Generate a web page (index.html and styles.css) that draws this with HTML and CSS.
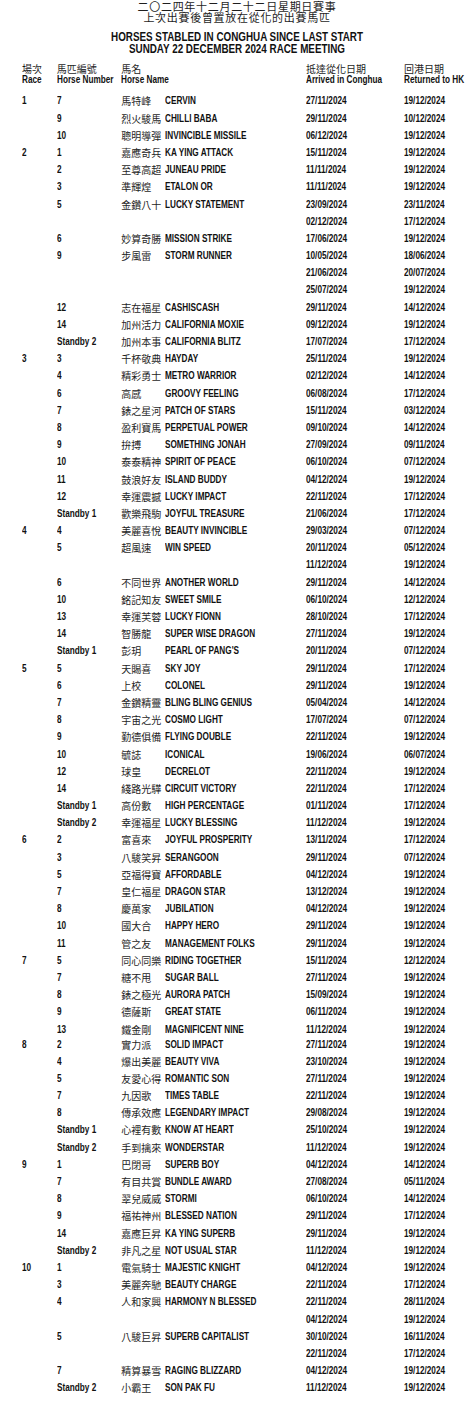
FILE: index.html
```html
<!DOCTYPE html>
<html lang="zh-Hant">
<head>
<meta charset="utf-8">
<title>HORSES STABLED IN CONGHUA SINCE LAST START</title>
<link rel="stylesheet" href="styles.css">
</head>
<body>
<header class="titles">
  <div class="title-zh">
    <div>二〇二四年十二月二十二日星期日賽事</div>
    <div>上次出賽後曾置放在從化的出賽馬匹</div>
  </div>
  <div class="title-en">
    <div>HORSES STABLED IN CONGHUA SINCE LAST START</div>
    <div>SUNDAY 22 DECEMBER 2024 RACE MEETING</div>
  </div>
</header>

<div class="head row">
  <div class="hc"><span class="hz">場次</span><span class="he">Race</span></div>
  <div class="hc"><span class="hz">馬匹編號</span><span class="he">Horse Number</span></div>
  <div class="hc"><span class="hz">馬名</span><span class="he">Horse Name</span></div>
  <div class="hc"><span class="hz">抵達從化日期</span><span class="he">Arrived in Conghua</span></div>
  <div class="hc"><span class="hz">回港日期</span><span class="he">Returned to HK</span></div>
</div>

<main class="table">
  <section class="race">
    <div class="row"><span class="rn">1</span><span class="no">7</span><span class="zh">馬特峰</span><span class="en">CERVIN</span><span class="d">27/11/2024</span><span class="d">19/12/2024</span></div>
    <div class="row"><span class="rn"></span><span class="no">9</span><span class="zh">烈火駿馬</span><span class="en">CHILLI BABA</span><span class="d">29/11/2024</span><span class="d">10/12/2024</span></div>
    <div class="row"><span class="rn"></span><span class="no">10</span><span class="zh">聰明導彈</span><span class="en">INVINCIBLE MISSILE</span><span class="d">06/12/2024</span><span class="d">19/12/2024</span></div>
  </section>
  <section class="race">
    <div class="row"><span class="rn">2</span><span class="no">1</span><span class="zh">嘉應奇兵</span><span class="en">KA YING ATTACK</span><span class="d">15/11/2024</span><span class="d">19/12/2024</span></div>
    <div class="row"><span class="rn"></span><span class="no">2</span><span class="zh">至尊高超</span><span class="en">JUNEAU PRIDE</span><span class="d">11/11/2024</span><span class="d">19/12/2024</span></div>
    <div class="row"><span class="rn"></span><span class="no">3</span><span class="zh">準輝煌</span><span class="en">ETALON OR</span><span class="d">11/11/2024</span><span class="d">19/12/2024</span></div>
    <div class="row"><span class="rn"></span><span class="no">5</span><span class="zh">金鑽八十</span><span class="en">LUCKY STATEMENT</span><span class="d">23/09/2024</span><span class="d">23/11/2024</span></div>
    <div class="row"><span class="d first">02/12/2024</span><span class="d">17/12/2024</span></div>
    <div class="row"><span class="rn"></span><span class="no">6</span><span class="zh">妙算奇勝</span><span class="en">MISSION STRIKE</span><span class="d">17/06/2024</span><span class="d">19/12/2024</span></div>
    <div class="row"><span class="rn"></span><span class="no">9</span><span class="zh">步風雷</span><span class="en">STORM RUNNER</span><span class="d">10/05/2024</span><span class="d">18/06/2024</span></div>
    <div class="row"><span class="d first">21/06/2024</span><span class="d">20/07/2024</span></div>
    <div class="row"><span class="d first">25/07/2024</span><span class="d">19/12/2024</span></div>
    <div class="row"><span class="rn"></span><span class="no">12</span><span class="zh">志在福星</span><span class="en">CASHISCASH</span><span class="d">29/11/2024</span><span class="d">14/12/2024</span></div>
    <div class="row"><span class="rn"></span><span class="no">14</span><span class="zh">加州活力</span><span class="en">CALIFORNIA MOXIE</span><span class="d">09/12/2024</span><span class="d">19/12/2024</span></div>
    <div class="row"><span class="rn"></span><span class="no">Standby 2</span><span class="zh">加州本事</span><span class="en">CALIFORNIA BLITZ</span><span class="d">17/07/2024</span><span class="d">17/12/2024</span></div>
  </section>
  <section class="race">
    <div class="row"><span class="rn">3</span><span class="no">3</span><span class="zh">千杯敬典</span><span class="en">HAYDAY</span><span class="d">25/11/2024</span><span class="d">19/12/2024</span></div>
    <div class="row"><span class="rn"></span><span class="no">4</span><span class="zh">精彩勇士</span><span class="en">METRO WARRIOR</span><span class="d">02/12/2024</span><span class="d">14/12/2024</span></div>
    <div class="row"><span class="rn"></span><span class="no">6</span><span class="zh">高感</span><span class="en">GROOVY FEELING</span><span class="d">06/08/2024</span><span class="d">17/12/2024</span></div>
    <div class="row"><span class="rn"></span><span class="no">7</span><span class="zh">錶之星河</span><span class="en">PATCH OF STARS</span><span class="d">15/11/2024</span><span class="d">03/12/2024</span></div>
    <div class="row"><span class="rn"></span><span class="no">8</span><span class="zh">盈利寶馬</span><span class="en">PERPETUAL POWER</span><span class="d">09/10/2024</span><span class="d">14/12/2024</span></div>
    <div class="row"><span class="rn"></span><span class="no">9</span><span class="zh">拚搏</span><span class="en">SOMETHING JONAH</span><span class="d">27/09/2024</span><span class="d">09/11/2024</span></div>
    <div class="row"><span class="rn"></span><span class="no">10</span><span class="zh">泰泰精神</span><span class="en">SPIRIT OF PEACE</span><span class="d">06/10/2024</span><span class="d">07/12/2024</span></div>
    <div class="row"><span class="rn"></span><span class="no">11</span><span class="zh">鼓浪好友</span><span class="en">ISLAND BUDDY</span><span class="d">04/12/2024</span><span class="d">19/12/2024</span></div>
    <div class="row"><span class="rn"></span><span class="no">12</span><span class="zh">幸運震撼</span><span class="en">LUCKY IMPACT</span><span class="d">22/11/2024</span><span class="d">17/12/2024</span></div>
    <div class="row"><span class="rn"></span><span class="no">Standby 1</span><span class="zh">歡樂飛駒</span><span class="en">JOYFUL TREASURE</span><span class="d">21/06/2024</span><span class="d">17/12/2024</span></div>
  </section>
  <section class="race">
    <div class="row"><span class="rn">4</span><span class="no">4</span><span class="zh">美麗喜悅</span><span class="en">BEAUTY INVINCIBLE</span><span class="d">29/03/2024</span><span class="d">07/12/2024</span></div>
    <div class="row"><span class="rn"></span><span class="no">5</span><span class="zh">超風速</span><span class="en">WIN SPEED</span><span class="d">20/11/2024</span><span class="d">05/12/2024</span></div>
    <div class="row"><span class="d first">11/12/2024</span><span class="d">19/12/2024</span></div>
    <div class="row"><span class="rn"></span><span class="no">6</span><span class="zh">不同世界</span><span class="en">ANOTHER WORLD</span><span class="d">29/11/2024</span><span class="d">14/12/2024</span></div>
    <div class="row"><span class="rn"></span><span class="no">10</span><span class="zh">銘記知友</span><span class="en">SWEET SMILE</span><span class="d">06/10/2024</span><span class="d">12/12/2024</span></div>
    <div class="row"><span class="rn"></span><span class="no">13</span><span class="zh">幸運芙蓉</span><span class="en">LUCKY FIONN</span><span class="d">28/10/2024</span><span class="d">17/12/2024</span></div>
    <div class="row"><span class="rn"></span><span class="no">14</span><span class="zh">智勝龍</span><span class="en">SUPER WISE DRAGON</span><span class="d">27/11/2024</span><span class="d">19/12/2024</span></div>
    <div class="row"><span class="rn"></span><span class="no">Standby 1</span><span class="zh">彭玥</span><span class="en">PEARL OF PANG'S</span><span class="d">20/11/2024</span><span class="d">07/12/2024</span></div>
  </section>
  <section class="race">
    <div class="row"><span class="rn">5</span><span class="no">5</span><span class="zh">天賜喜</span><span class="en">SKY JOY</span><span class="d">29/11/2024</span><span class="d">17/12/2024</span></div>
    <div class="row"><span class="rn"></span><span class="no">6</span><span class="zh">上校</span><span class="en">COLONEL</span><span class="d">29/11/2024</span><span class="d">19/12/2024</span></div>
    <div class="row"><span class="rn"></span><span class="no">7</span><span class="zh">金鑽精靈</span><span class="en">BLING BLING GENIUS</span><span class="d">05/04/2024</span><span class="d">14/12/2024</span></div>
    <div class="row"><span class="rn"></span><span class="no">8</span><span class="zh">宇宙之光</span><span class="en">COSMO LIGHT</span><span class="d">17/07/2024</span><span class="d">07/12/2024</span></div>
    <div class="row"><span class="rn"></span><span class="no">9</span><span class="zh">勤德俱備</span><span class="en">FLYING DOUBLE</span><span class="d">22/11/2024</span><span class="d">19/12/2024</span></div>
    <div class="row"><span class="rn"></span><span class="no">10</span><span class="zh">毓誌</span><span class="en">ICONICAL</span><span class="d">19/06/2024</span><span class="d">06/07/2024</span></div>
    <div class="row"><span class="rn"></span><span class="no">12</span><span class="zh">球皇</span><span class="en">DECRELOT</span><span class="d">22/11/2024</span><span class="d">19/12/2024</span></div>
    <div class="row"><span class="rn"></span><span class="no">14</span><span class="zh">綫路光驊</span><span class="en">CIRCUIT VICTORY</span><span class="d">22/11/2024</span><span class="d">17/12/2024</span></div>
    <div class="row"><span class="rn"></span><span class="no">Standby 1</span><span class="zh">高份數</span><span class="en">HIGH PERCENTAGE</span><span class="d">01/11/2024</span><span class="d">17/12/2024</span></div>
    <div class="row"><span class="rn"></span><span class="no">Standby 2</span><span class="zh">幸運福星</span><span class="en">LUCKY BLESSING</span><span class="d">11/12/2024</span><span class="d">19/12/2024</span></div>
  </section>
  <section class="race">
    <div class="row"><span class="rn">6</span><span class="no">2</span><span class="zh">富喜來</span><span class="en">JOYFUL PROSPERITY</span><span class="d">13/11/2024</span><span class="d">17/12/2024</span></div>
    <div class="row"><span class="rn"></span><span class="no">3</span><span class="zh">八駿笑昇</span><span class="en">SERANGOON</span><span class="d">29/11/2024</span><span class="d">07/12/2024</span></div>
    <div class="row"><span class="rn"></span><span class="no">5</span><span class="zh">亞福得寶</span><span class="en">AFFORDABLE</span><span class="d">04/12/2024</span><span class="d">19/12/2024</span></div>
    <div class="row"><span class="rn"></span><span class="no">7</span><span class="zh">皇仁福星</span><span class="en">DRAGON STAR</span><span class="d">13/12/2024</span><span class="d">19/12/2024</span></div>
    <div class="row"><span class="rn"></span><span class="no">8</span><span class="zh">慶萬家</span><span class="en">JUBILATION</span><span class="d">04/12/2024</span><span class="d">19/12/2024</span></div>
    <div class="row"><span class="rn"></span><span class="no">10</span><span class="zh">國大合</span><span class="en">HAPPY HERO</span><span class="d">29/11/2024</span><span class="d">19/12/2024</span></div>
    <div class="row"><span class="rn"></span><span class="no">11</span><span class="zh">管之友</span><span class="en">MANAGEMENT FOLKS</span><span class="d">29/11/2024</span><span class="d">19/12/2024</span></div>
  </section>
  <section class="race">
    <div class="row"><span class="rn">7</span><span class="no">5</span><span class="zh">同心同樂</span><span class="en">RIDING TOGETHER</span><span class="d">15/11/2024</span><span class="d">12/12/2024</span></div>
    <div class="row"><span class="rn"></span><span class="no">7</span><span class="zh">糖不甩</span><span class="en">SUGAR BALL</span><span class="d">27/11/2024</span><span class="d">19/12/2024</span></div>
    <div class="row"><span class="rn"></span><span class="no">8</span><span class="zh">錶之極光</span><span class="en">AURORA PATCH</span><span class="d">15/09/2024</span><span class="d">19/12/2024</span></div>
    <div class="row"><span class="rn"></span><span class="no">9</span><span class="zh">德薩斯</span><span class="en">GREAT STATE</span><span class="d">06/11/2024</span><span class="d">19/12/2024</span></div>
    <div class="row"><span class="rn"></span><span class="no">13</span><span class="zh">鐵金剛</span><span class="en">MAGNIFICENT NINE</span><span class="d">11/12/2024</span><span class="d">19/12/2024</span></div>
  </section>
  <section class="race tight">
    <div class="row"><span class="rn">8</span><span class="no">2</span><span class="zh">實力派</span><span class="en">SOLID IMPACT</span><span class="d">27/11/2024</span><span class="d">19/12/2024</span></div>
    <div class="row"><span class="rn"></span><span class="no">4</span><span class="zh">爆出美麗</span><span class="en">BEAUTY VIVA</span><span class="d">23/10/2024</span><span class="d">19/12/2024</span></div>
    <div class="row"><span class="rn"></span><span class="no">5</span><span class="zh">友愛心得</span><span class="en">ROMANTIC SON</span><span class="d">27/11/2024</span><span class="d">19/12/2024</span></div>
    <div class="row"><span class="rn"></span><span class="no">7</span><span class="zh">九因歌</span><span class="en">TIMES TABLE</span><span class="d">22/11/2024</span><span class="d">19/12/2024</span></div>
    <div class="row"><span class="rn"></span><span class="no">8</span><span class="zh">傳承效應</span><span class="en">LEGENDARY IMPACT</span><span class="d">29/08/2024</span><span class="d">19/12/2024</span></div>
    <div class="row"><span class="rn"></span><span class="no">Standby 1</span><span class="zh">心裡有數</span><span class="en">KNOW AT HEART</span><span class="d">25/10/2024</span><span class="d">19/12/2024</span></div>
    <div class="row"><span class="rn"></span><span class="no">Standby 2</span><span class="zh">手到擒來</span><span class="en">WONDERSTAR</span><span class="d">11/12/2024</span><span class="d">19/12/2024</span></div>
  </section>
  <section class="race">
    <div class="row"><span class="rn">9</span><span class="no">1</span><span class="zh">巴閉哥</span><span class="en">SUPERB BOY</span><span class="d">04/12/2024</span><span class="d">14/12/2024</span></div>
    <div class="row"><span class="rn"></span><span class="no">7</span><span class="zh">有目共賞</span><span class="en">BUNDLE AWARD</span><span class="d">27/08/2024</span><span class="d">05/11/2024</span></div>
    <div class="row"><span class="rn"></span><span class="no">8</span><span class="zh">翠兒威威</span><span class="en">STORMI</span><span class="d">06/10/2024</span><span class="d">14/12/2024</span></div>
    <div class="row"><span class="rn"></span><span class="no">9</span><span class="zh">福祐神州</span><span class="en">BLESSED NATION</span><span class="d">29/11/2024</span><span class="d">17/12/2024</span></div>
    <div class="row"><span class="rn"></span><span class="no">14</span><span class="zh">嘉應巨昇</span><span class="en">KA YING SUPERB</span><span class="d">29/11/2024</span><span class="d">19/12/2024</span></div>
    <div class="row"><span class="rn"></span><span class="no">Standby 2</span><span class="zh">非凡之星</span><span class="en">NOT USUAL STAR</span><span class="d">11/12/2024</span><span class="d">19/12/2024</span></div>
  </section>
  <section class="race">
    <div class="row"><span class="rn">10</span><span class="no">1</span><span class="zh">電氣騎士</span><span class="en">MAJESTIC KNIGHT</span><span class="d">04/12/2024</span><span class="d">19/12/2024</span></div>
    <div class="row"><span class="rn"></span><span class="no">3</span><span class="zh">美麗奔馳</span><span class="en">BEAUTY CHARGE</span><span class="d">22/11/2024</span><span class="d">17/12/2024</span></div>
    <div class="row"><span class="rn"></span><span class="no">4</span><span class="zh">人和家興</span><span class="en">HARMONY N BLESSED</span><span class="d">22/11/2024</span><span class="d">28/11/2024</span></div>
    <div class="row"><span class="d first">04/12/2024</span><span class="d">19/12/2024</span></div>
    <div class="row"><span class="rn"></span><span class="no">5</span><span class="zh">八駿巨昇</span><span class="en">SUPERB CAPITALIST</span><span class="d">30/10/2024</span><span class="d">16/11/2024</span></div>
    <div class="row"><span class="d first">22/11/2024</span><span class="d">17/12/2024</span></div>
    <div class="row"><span class="rn"></span><span class="no">7</span><span class="zh">精算暴雪</span><span class="en">RAGING BLIZZARD</span><span class="d">04/12/2024</span><span class="d">19/12/2024</span></div>
    <div class="row"><span class="rn"></span><span class="no">Standby 2</span><span class="zh">小霸王</span><span class="en">SON PAK FU</span><span class="d">11/12/2024</span><span class="d">19/12/2024</span></div>
  </section>
</main>
</body>
</html>
```

FILE: styles.css
```css
html, body {
  margin: 0;
  padding: 0;
  background: #ffffff;
}

body {
  width: 474px;
  color: #111111;
  font-family: "Liberation Sans", Arial, sans-serif;
  font-weight: bold;
  font-size: 10px;
}

.titles {
  text-align: center;
}

.title-zh {
  padding-top: 1px;
  font-family: "Noto Sans CJK TC", "Noto Sans CJK SC", sans-serif;
  font-weight: 400;
  font-size: 11px;
  letter-spacing: 0.7px;
  line-height: 11px;
  color: #1e1e1e;
}

.title-en {
  margin-top: 7.5px;
  font-size: 12px;
  line-height: 12.3px;
  transform: scaleX(0.82);
  transform-origin: 237px 0;
}

.row {
  display: grid;
  grid-template-columns: 34.7px 64.5px 43.8px 141px 98px 1fr;
  padding-left: 22px;
  height: 17.19px;
  line-height: 17.19px;
  white-space: nowrap;
}

.rn, .no, .en, .d, .he {
  transform: scaleX(0.82);
  transform-origin: 0 50%;
}

.head.row {
  height: auto;
  line-height: 11px;
  margin-top: 8.4px;
  margin-bottom: 6.9px;
  grid-template-columns: 34.7px 64.5px 184.8px 98px 1fr;
}

.hc {
  display: flex;
  flex-direction: column;
  align-items: flex-start;
}

.hz {
  font-family: "Noto Sans CJK TC", "Noto Sans CJK SC", sans-serif;
  font-weight: 400;
  font-size: 10px;
  color: #1e1e1e;
}

.he {
  font-size: 10px;
}

.zh {
  font-family: "Noto Sans CJK TC", "Noto Sans CJK SC", sans-serif;
  font-weight: 400;
  font-size: 10px;
  color: #1e1e1e;
}

.d.first {
  grid-column: 5;
}

.race.tight {
  margin-top: -2.2px;
}
```
